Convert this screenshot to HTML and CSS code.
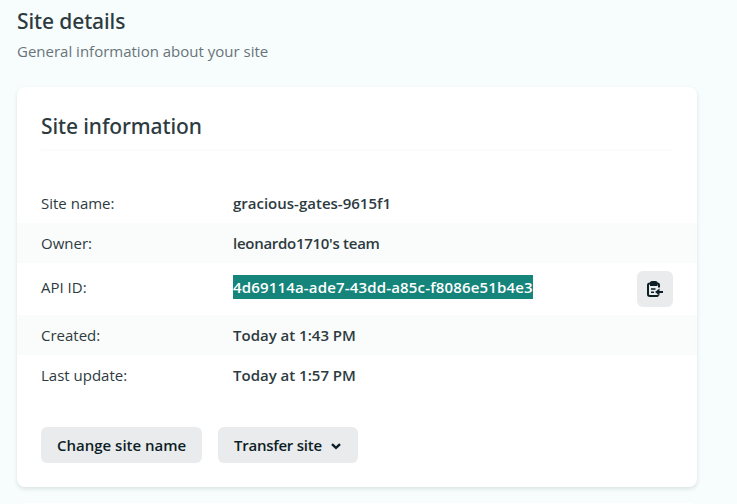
FILE: index.html
```html
<!DOCTYPE html>
<html lang="en">
<head>
<meta charset="utf-8">
<title>Site details</title>
<link rel="stylesheet" href="styles.css">
</head>
<body>
<main class="page">
  <header class="intro">
    <h1>Site details</h1>
    <p>General information about your site</p>
  </header>
  <section class="card">
    <h2>Site information</h2>
    <dl class="details">
      <div class="row"><dt>Site name:</dt><dd>gracious-gates-9615f1</dd></div>
      <div class="row"><dt>Owner:</dt><dd class="owner">leonardo1710's team</dd></div>
      <div class="row row-api">
        <dt>API ID:</dt><dd><span class="selected">4d69114a-ade7-43dd-a85c-f8086e51b4e3</span></dd>
        <button class="btn copy" aria-label="Copy to clipboard">
          <svg width="16" height="16" viewBox="0 0 16 16" fill="none" stroke="currentColor" stroke-width="2">
            <path d="M4 2.5H2.7Q1 2.5 1 4.2V13.3Q1 15 2.7 15H9.3Q11 15 11 13.7M8.5 2.5H10.5Q12 2.5 12 4.2V6.5"/>
            <path d="M3 5V1.5Q3 0 5 0H8.5Q10.5 0 10.5 1.5V5Z" fill="currentColor" stroke="none"/>
            <path d="M4 8H8.5M4 11.3H7" stroke-width="1.6"/>
            <path d="M10 11H16"/>
            <path d="M8 11L12.5 7.5V14.5Z" fill="currentColor" stroke="none"/>
          </svg>
        </button>
      </div>
      <div class="row"><dt>Created:</dt><dd>Today at 1:43 PM</dd></div>
      <div class="row"><dt>Last update:</dt><dd>Today at 1:57 PM</dd></div>
    </dl>
    <div class="actions">
      <button class="btn change">Change site name</button>
      <button class="btn transfer"><span>Transfer site</span>
        <svg width="10" height="7" viewBox="0 0 10 7" fill="none" stroke="currentColor" stroke-width="2.4"><path d="M1 1.2L5 4.8L9 1.2"/></svg>
      </button>
    </div>
  </section>
  <section class="next"></section>
</main>
</body>
</html>
```

FILE: styles.css
```css
* { box-sizing: border-box; }
body {
  margin: 0;
  overflow: hidden;
  background: #f7fdfd;
  color: #2d3b41;
  font: 15px/24px "Segoe UI", "Open Sans", "Noto Sans", sans-serif;
}
h1, h2, p, dl, dt, dd { margin: 0; }
.page { width: 697px; height: 504px; padding: 5px 0 0 17px; }
h1, h2 { font-family: "Segoe UI", "Noto Sans", sans-serif; font-size: 21px; line-height: 32px; font-weight: 500; letter-spacing: -.1px; }
.intro { height: 82px; }
.intro p { line-height: 24px; margin-top: 2px; color: #69747a; }
.card {
  height: 400px;
  padding-top: 23px;
  background: #fff;
  border-radius: 8px;
  box-shadow: 0 2px 4px rgba(14, 30, 37, .12);
}
.card h2 { margin: 0 24px; height: 41px; border-bottom: 2px solid #fafbfb; }
.details { margin-top: 32px; }
.row { display: flex; align-items: center; height: 40px; padding: 0 24px; }
.row:nth-child(even) { background: #fafbfb; }
.row-api { height: 52px; padding-bottom: 4px; }
.row dt { width: 192px; }
.row dd { flex: 1; font-weight: 600; }
.row .owner { letter-spacing: -.28px; }
.selected { display: block; width: 300px; height: 24px; background: #15847a; color: #fff; letter-spacing: .165px; white-space: nowrap; }
.btn {
  display: flex;
  align-items: center;
  height: 36px;
  border: 0;
  border-radius: 6px;
  padding: 0 16px;
  background: #e9ebed;
  color: #0e1e25;
  font: inherit;
  font-weight: 600;
  white-space: nowrap;
}
.copy { width: 36px; padding: 0 0 0 10px; margin-top: 4px; }
.actions { display: flex; gap: 16px; margin: 32px 24px 0; }
.change { width: 161px; }
.transfer { width: 140px; gap: 9px; letter-spacing: -.24px; }
.transfer svg { margin-top: 3px; }
.next { height: 1px; margin: 16px 5px 0; background: #fff; }
```
